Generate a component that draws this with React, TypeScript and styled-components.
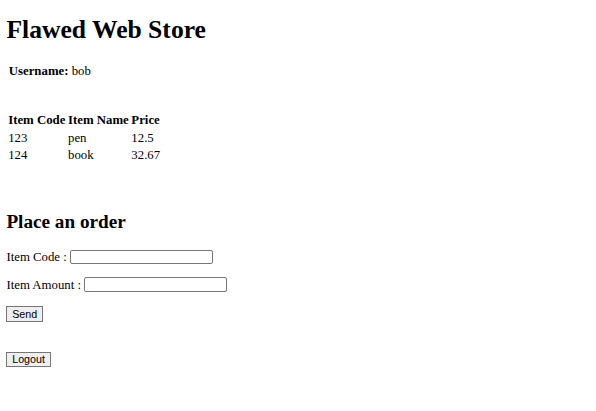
import React from "react";
import styled, { createGlobalStyle } from "styled-components";

const Global = createGlobalStyle`
  html, body { margin: 0; padding: 0; background: #fff; }
  body {
    font-family: "Liberation Serif", "Times New Roman", serif;
    font-size: 12.8px;
    line-height: 14.4px;
    color: #000;
  }
`;

const Page = styled.div`
  display: flex;
  flex-direction: column;
  align-items: flex-start;
  padding: 0 6.4px;
`;

const Title = styled.h1`
  font-size: 25.6px;
  line-height: 29.6px;
  font-weight: bold;
  margin: 14.6px 0 0 0;
`;

const UserLine = styled.div`
  margin: 20.3px 0 0 2.4px;
`;

const ItemsTable = styled.table`
  margin-top: 32.7px;
  border-collapse: separate;
  border-spacing: 1.6px;
  font-size: 12.8px;
  line-height: 14.8px;
`;

const Th = styled.th`
  text-align: left;
  font-weight: bold;
  padding: 0.8px;
`;

const Td = styled.td`
  padding: 0.8px;
`;

const OrderTitle = styled.h2`
  font-size: 19.2px;
  line-height: 22.4px;
  font-weight: bold;
  margin: 46.5px 0 0 0;
`;

const Field = styled.div<{ $top: number }>`
  display: flex;
  align-items: baseline;
  gap: 3.4px;
  margin-top: ${(p) => p.$top}px;
`;

const TextInput = styled.input`
  box-sizing: border-box;
  width: 143px;
  height: 14.8px;
  padding: 0.8px 1.6px;
  border: 1px solid #767676;
  border-radius: 2px;
  font-family: "Liberation Sans", Arial, sans-serif;
  font-size: 10.7px;
  background: #fff;
`;

const Button = styled.button<{ $top: number }>`
  box-sizing: border-box;
  margin-top: ${(p) => p.$top}px;
  font-family: "Liberation Sans", Arial, sans-serif;
  font-size: 10.7px;
  line-height: 12px;
  height: 15.4px;
  padding: 0 4.8px;
  border: 1px solid #767676;
  border-radius: 0;
  background: #efefef;
  color: #000;
`;

const items = [
  { code: "123", name: "pen", price: "12.5" },
  { code: "124", name: "book", price: "32.67" },
];

export default function App() {
  return (
    <Page>
      <Global />
      <Title>Flawed Web Store</Title>
      <UserLine>
        <b>Username:</b> bob
      </UserLine>
      <ItemsTable>
        <thead>
          <tr>
            <Th>Item Code</Th>
            <Th>Item Name</Th>
            <Th>Price</Th>
          </tr>
        </thead>
        <tbody>
          {items.map((it) => (
            <tr key={it.code}>
              <Td>{it.code}</Td>
              <Td>{it.name}</Td>
              <Td>{it.price}</Td>
            </tr>
          ))}
        </tbody>
      </ItemsTable>
      <OrderTitle>Place an order</OrderTitle>
      <Field $top={16}>
        <span>Item Code :</span>
        <TextInput type="text" />
      </Field>
      <Field $top={12.8}>
        <span>Item Amount :</span>
        <TextInput type="text" />
      </Field>
      <Button $top={14.3}>Send</Button>
      <Button $top={30}>Logout</Button>
    </Page>
  );
}
